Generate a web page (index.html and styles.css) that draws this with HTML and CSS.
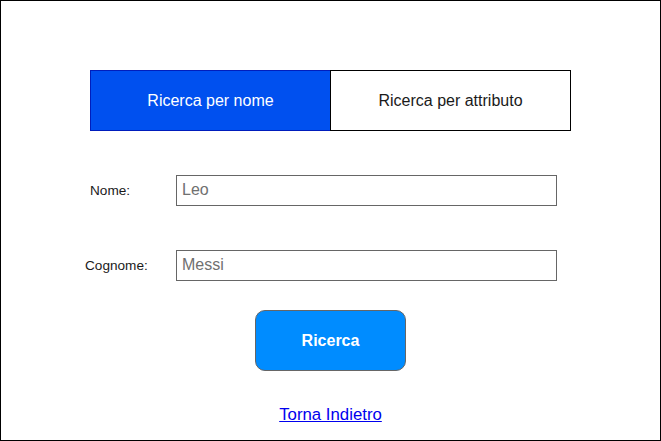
FILE: index.html
```html
<!DOCTYPE html>
<html lang="it">
  <head>
    <meta charset="UTF-8" />
    <meta name="viewport" content="width=device-width, initial-scale=1.0" />
    <title>Ricerca</title>
    <link rel="stylesheet" href="styles.css">
  </head>
  <body>
    <div class="frame">
      <div class="tabs">
        <div class="tab active">Ricerca per nome</div>
        <div class="tab">Ricerca per attributo</div>
      </div>

      <div class="field field-first">
        <label class="label label-nome" for="nome">Nome:</label>
        <input id="nome" class="input" type="text" placeholder="Leo" />
      </div>
      <div class="field">
        <label class="label label-cognome" for="cognome">Cognome:</label>
        <input id="cognome" class="input" type="text" placeholder="Messi" />
      </div>

      <button class="search">Ricerca</button>

      <a class="back" href="#">Torna Indietro</a>
    </div>
  </body>
</html>
```

FILE: styles.css
```css
body {
  margin: 0;
  font-family: "Liberation Sans", Arial, sans-serif;
  background: white;
}

.frame {
  width: 661px;
  height: 441px;
  box-sizing: border-box;
  border: 1px solid black;
  padding-top: 69px;
  display: flex;
  flex-direction: column;
}

.tabs {
  display: flex;
  margin-left: 89px;
  height: 61px;
}

.tab {
  box-sizing: border-box;
  width: 241px;
  height: 61px;
  border: 1px solid black;
  display: flex;
  align-items: center;
  justify-content: center;
  font-size: 16px;
  color: #1a1a1a;
}

.tab.active {
  width: 240px;
  background-color: #0050ef;
  border-color: #001dbc;
  border-right: none;
  color: white;
}

.field {
  display: flex;
  align-items: center;
  height: 31px;
  margin-top: 44px;
}

.label {
  box-sizing: border-box;
  width: 175px;
  font-size: 13.6px;
  color: #1a1a1a;
}

.label-nome {
  padding-left: 89px;
}

.label-cognome {
  padding-left: 84px;
}

.input {
  box-sizing: border-box;
  width: 381px;
  height: 31px;
  margin: 0;
  border: 1px solid #666;
  padding: 0 5px 2px;
  font-family: "Liberation Sans", Arial, sans-serif;
  font-size: 16px;
  outline: none;
}

.input::placeholder {
  color: #707070;
}

.search {
  align-self: center;
  width: 151px;
  height: 61px;
  margin-top: 29px;
  border: 1px solid #666;
  border-radius: 10px;
  background-color: #008cff;
  color: white;
  font-family: "Liberation Sans", Arial, sans-serif;
  font-size: 16px;
  font-weight: bold;
}

.back {
  align-self: center;
  margin-top: 34px;
  font-size: 16.8px;
  color: #0000ee;
}
```
